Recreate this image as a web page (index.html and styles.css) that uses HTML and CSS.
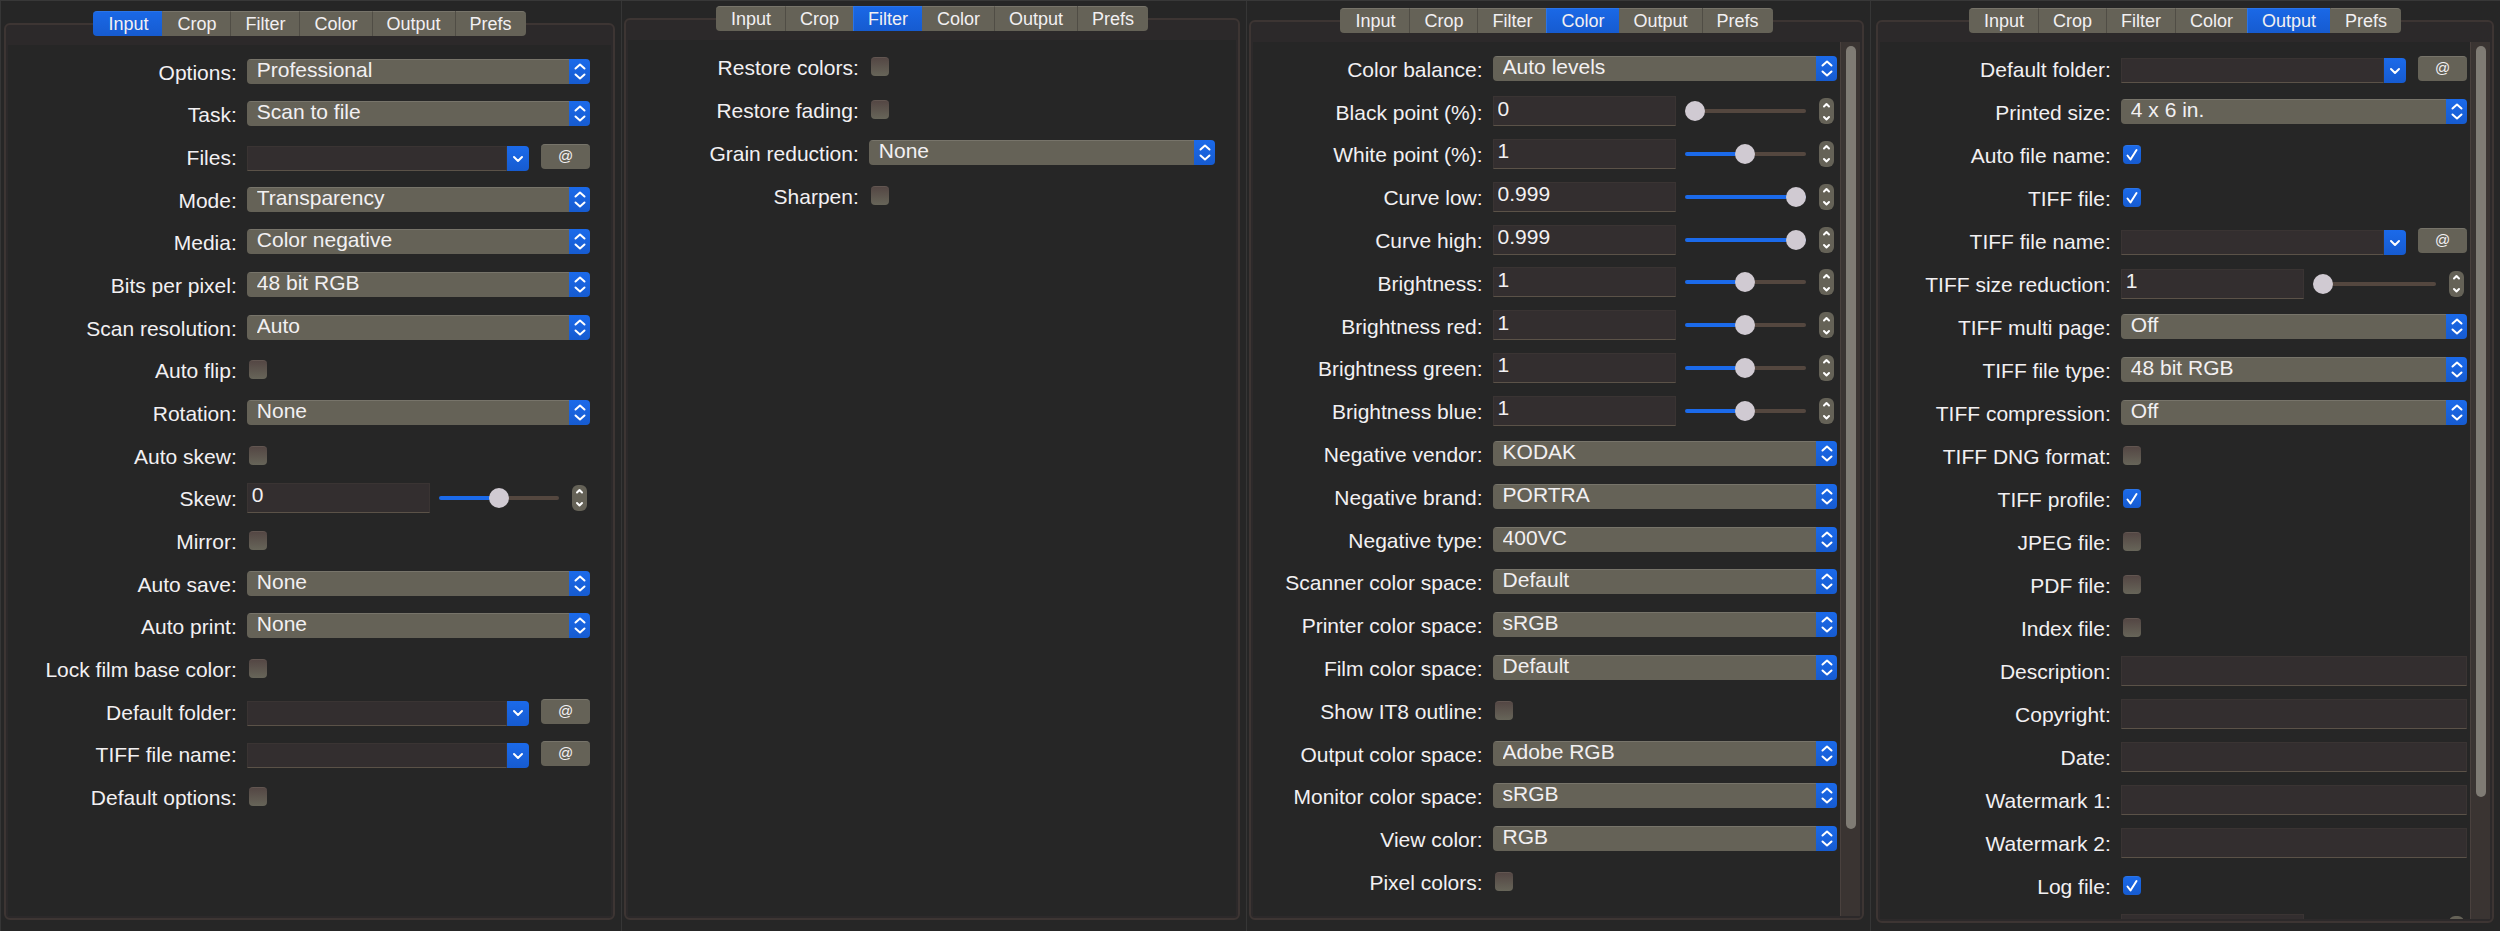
FILE: index.html
```
<!DOCTYPE html>
<html lang="en">
<head>
  <meta charset="UTF-8">
  <meta name="viewport" content="width=device-width, initial-scale=1.0">
  <title>Scan settings</title>
  <link rel="stylesheet" href="styles.css">
</head>
<body>
  <main class="panels">

    <!-- Input -->
    <section class="panel panel-input">
      <nav class="tabs">
        <button class="tab active">Input</button>
        <button class="tab">Crop</button>
        <button class="tab">Filter</button>
        <button class="tab">Color</button>
        <button class="tab">Output</button>
        <button class="tab">Prefs</button>
      </nav>
      <div class="frame">
        <form class="form">
          <div class="row"><label for="in-options">Options:</label><select id="in-options"><option>Professional</option></select></div>
          <div class="row"><label for="in-task">Task:</label><select id="in-task"><option>Scan to file</option></select></div>
          <div class="row">
            <label for="in-files">Files:</label>
            <div class="field">
              <div class="combo"><input type="text" id="in-files"><button type="button" class="drop" aria-label="Show list"></button></div>
              <button type="button" class="at">@</button>
            </div>
          </div>
          <div class="row"><label for="in-mode">Mode:</label><select id="in-mode"><option>Transparency</option></select></div>
          <div class="row"><label for="in-media">Media:</label><select id="in-media"><option>Color negative</option></select></div>
          <div class="row"><label for="in-bits">Bits per pixel:</label><select id="in-bits"><option>48 bit RGB</option></select></div>
          <div class="row"><label for="in-res">Scan resolution:</label><select id="in-res"><option>Auto</option></select></div>
          <div class="row"><label for="in-flip">Auto flip:</label><input type="checkbox" id="in-flip"></div>
          <div class="row"><label for="in-rotation">Rotation:</label><select id="in-rotation"><option>None</option></select></div>
          <div class="row"><label for="in-autoskew">Auto skew:</label><input type="checkbox" id="in-autoskew"></div>
          <div class="row">
            <label for="in-skew">Skew:</label>
            <div class="field">
              <input type="text" class="number" id="in-skew" value="0">
              <input type="range" class="slider" aria-label="Skew" value="50" style="--fill: 50%">
              <div class="stepper"><button type="button" class="up" aria-label="Increase"></button><button type="button" class="down" aria-label="Decrease"></button></div>
            </div>
          </div>
          <div class="row"><label for="in-mirror">Mirror:</label><input type="checkbox" id="in-mirror"></div>
          <div class="row"><label for="in-save">Auto save:</label><select id="in-save"><option>None</option></select></div>
          <div class="row"><label for="in-print">Auto print:</label><select id="in-print"><option>None</option></select></div>
          <div class="row"><label for="in-lock">Lock film base color:</label><input type="checkbox" id="in-lock"></div>
          <div class="row">
            <label for="in-folder">Default folder:</label>
            <div class="field">
              <div class="combo"><input type="text" id="in-folder"><button type="button" class="drop" aria-label="Show list"></button></div>
              <button type="button" class="at">@</button>
            </div>
          </div>
          <div class="row">
            <label for="in-tiffname">TIFF file name:</label>
            <div class="field">
              <div class="combo"><input type="text" id="in-tiffname"><button type="button" class="drop" aria-label="Show list"></button></div>
              <button type="button" class="at">@</button>
            </div>
          </div>
          <div class="row"><label for="in-defaults">Default options:</label><input type="checkbox" id="in-defaults"></div>
        </form>
      </div>
    </section>

    <!-- Filter -->
    <section class="panel panel-filter">
      <nav class="tabs">
        <button class="tab">Input</button>
        <button class="tab">Crop</button>
        <button class="tab active">Filter</button>
        <button class="tab">Color</button>
        <button class="tab">Output</button>
        <button class="tab">Prefs</button>
      </nav>
      <div class="frame">
        <form class="form">
          <div class="row"><label for="fi-colors">Restore colors:</label><input type="checkbox" id="fi-colors"></div>
          <div class="row"><label for="fi-fading">Restore fading:</label><input type="checkbox" id="fi-fading"></div>
          <div class="row"><label for="fi-grain">Grain reduction:</label><select id="fi-grain"><option>None</option></select></div>
          <div class="row"><label for="fi-sharpen">Sharpen:</label><input type="checkbox" id="fi-sharpen"></div>
        </form>
      </div>
    </section>

    <!-- Color -->
    <section class="panel panel-color">
      <nav class="tabs">
        <button class="tab">Input</button>
        <button class="tab">Crop</button>
        <button class="tab">Filter</button>
        <button class="tab active">Color</button>
        <button class="tab">Output</button>
        <button class="tab">Prefs</button>
      </nav>
      <div class="frame">
        <form class="form scrolled">
          <div class="row"><label for="co-balance">Color balance:</label><select id="co-balance"><option>Auto levels</option></select></div>
          <div class="row">
            <label for="co-black">Black point (%):</label>
            <div class="field">
              <input type="text" class="number" id="co-black" value="0">
              <input type="range" class="slider" aria-label="Black point" value="0" style="--fill: 0%">
              <div class="stepper"><button type="button" class="up" aria-label="Increase"></button><button type="button" class="down" aria-label="Decrease"></button></div>
            </div>
          </div>
          <div class="row">
            <label for="co-white">White point (%):</label>
            <div class="field">
              <input type="text" class="number" id="co-white" value="1">
              <input type="range" class="slider" aria-label="White point" value="50" style="--fill: 50%">
              <div class="stepper"><button type="button" class="up" aria-label="Increase"></button><button type="button" class="down" aria-label="Decrease"></button></div>
            </div>
          </div>
          <div class="row">
            <label for="co-low">Curve low:</label>
            <div class="field">
              <input type="text" class="number" id="co-low" value="0.999">
              <input type="range" class="slider" aria-label="Curve low" value="100" style="--fill: 100%">
              <div class="stepper"><button type="button" class="up" aria-label="Increase"></button><button type="button" class="down" aria-label="Decrease"></button></div>
            </div>
          </div>
          <div class="row">
            <label for="co-high">Curve high:</label>
            <div class="field">
              <input type="text" class="number" id="co-high" value="0.999">
              <input type="range" class="slider" aria-label="Curve high" value="100" style="--fill: 100%">
              <div class="stepper"><button type="button" class="up" aria-label="Increase"></button><button type="button" class="down" aria-label="Decrease"></button></div>
            </div>
          </div>
          <div class="row">
            <label for="co-bright">Brightness:</label>
            <div class="field">
              <input type="text" class="number" id="co-bright" value="1">
              <input type="range" class="slider" aria-label="Brightness" value="50" style="--fill: 50%">
              <div class="stepper"><button type="button" class="up" aria-label="Increase"></button><button type="button" class="down" aria-label="Decrease"></button></div>
            </div>
          </div>
          <div class="row">
            <label for="co-red">Brightness red:</label>
            <div class="field">
              <input type="text" class="number" id="co-red" value="1">
              <input type="range" class="slider" aria-label="Brightness red" value="50" style="--fill: 50%">
              <div class="stepper"><button type="button" class="up" aria-label="Increase"></button><button type="button" class="down" aria-label="Decrease"></button></div>
            </div>
          </div>
          <div class="row">
            <label for="co-green">Brightness green:</label>
            <div class="field">
              <input type="text" class="number" id="co-green" value="1">
              <input type="range" class="slider" aria-label="Brightness green" value="50" style="--fill: 50%">
              <div class="stepper"><button type="button" class="up" aria-label="Increase"></button><button type="button" class="down" aria-label="Decrease"></button></div>
            </div>
          </div>
          <div class="row">
            <label for="co-blue">Brightness blue:</label>
            <div class="field">
              <input type="text" class="number" id="co-blue" value="1">
              <input type="range" class="slider" aria-label="Brightness blue" value="50" style="--fill: 50%">
              <div class="stepper"><button type="button" class="up" aria-label="Increase"></button><button type="button" class="down" aria-label="Decrease"></button></div>
            </div>
          </div>
          <div class="row"><label for="co-vendor">Negative vendor:</label><select id="co-vendor"><option>KODAK</option></select></div>
          <div class="row"><label for="co-brand">Negative brand:</label><select id="co-brand"><option>PORTRA</option></select></div>
          <div class="row"><label for="co-type">Negative type:</label><select id="co-type"><option>400VC</option></select></div>
          <div class="row"><label for="co-scanner">Scanner color space:</label><select id="co-scanner"><option>Default</option></select></div>
          <div class="row"><label for="co-printer">Printer color space:</label><select id="co-printer"><option>sRGB</option></select></div>
          <div class="row"><label for="co-film">Film color space:</label><select id="co-film"><option>Default</option></select></div>
          <div class="row"><label for="co-it8">Show IT8 outline:</label><input type="checkbox" id="co-it8"></div>
          <div class="row"><label for="co-output">Output color space:</label><select id="co-output"><option>Adobe RGB</option></select></div>
          <div class="row"><label for="co-monitor">Monitor color space:</label><select id="co-monitor"><option>sRGB</option></select></div>
          <div class="row"><label for="co-view">View color:</label><select id="co-view"><option>RGB</option></select></div>
          <div class="row"><label for="co-pixel">Pixel colors:</label><input type="checkbox" id="co-pixel"></div>
        </form>
        <div class="scrollbar"><div class="thumb" style="height: 90%"></div></div>
      </div>
    </section>

    <!-- Output -->
    <section class="panel panel-output">
      <nav class="tabs">
        <button class="tab">Input</button>
        <button class="tab">Crop</button>
        <button class="tab">Filter</button>
        <button class="tab">Color</button>
        <button class="tab active">Output</button>
        <button class="tab">Prefs</button>
      </nav>
      <div class="frame">
        <form class="form scrolled">
          <div class="row">
            <label for="ou-folder">Default folder:</label>
            <div class="field">
              <div class="combo"><input type="text" id="ou-folder"><button type="button" class="drop" aria-label="Show list"></button></div>
              <button type="button" class="at">@</button>
            </div>
          </div>
          <div class="row"><label for="ou-size">Printed size:</label><select id="ou-size"><option>4 x 6 in.</option></select></div>
          <div class="row"><label for="ou-autoname">Auto file name:</label><input type="checkbox" id="ou-autoname" checked></div>
          <div class="row"><label for="ou-tiff">TIFF file:</label><input type="checkbox" id="ou-tiff" checked></div>
          <div class="row">
            <label for="ou-tiffname">TIFF file name:</label>
            <div class="field">
              <div class="combo"><input type="text" id="ou-tiffname"><button type="button" class="drop" aria-label="Show list"></button></div>
              <button type="button" class="at">@</button>
            </div>
          </div>
          <div class="row">
            <label for="ou-reduction">TIFF size reduction:</label>
            <div class="field">
              <input type="text" class="number" id="ou-reduction" value="1">
              <input type="range" class="slider" aria-label="TIFF size reduction" value="0" style="--fill: 0%">
              <div class="stepper"><button type="button" class="up" aria-label="Increase"></button><button type="button" class="down" aria-label="Decrease"></button></div>
            </div>
          </div>
          <div class="row"><label for="ou-multi">TIFF multi page:</label><select id="ou-multi"><option>Off</option></select></div>
          <div class="row"><label for="ou-type">TIFF file type:</label><select id="ou-type"><option>48 bit RGB</option></select></div>
          <div class="row"><label for="ou-compression">TIFF compression:</label><select id="ou-compression"><option>Off</option></select></div>
          <div class="row"><label for="ou-dng">TIFF DNG format:</label><input type="checkbox" id="ou-dng"></div>
          <div class="row"><label for="ou-profile">TIFF profile:</label><input type="checkbox" id="ou-profile" checked></div>
          <div class="row"><label for="ou-jpeg">JPEG file:</label><input type="checkbox" id="ou-jpeg"></div>
          <div class="row"><label for="ou-pdf">PDF file:</label><input type="checkbox" id="ou-pdf"></div>
          <div class="row"><label for="ou-index">Index file:</label><input type="checkbox" id="ou-index"></div>
          <div class="row"><label for="ou-desc">Description:</label><input type="text" id="ou-desc"></div>
          <div class="row"><label for="ou-copy">Copyright:</label><input type="text" id="ou-copy"></div>
          <div class="row"><label for="ou-date">Date:</label><input type="text" id="ou-date"></div>
          <div class="row"><label for="ou-water1">Watermark 1:</label><input type="text" id="ou-water1"></div>
          <div class="row"><label for="ou-water2">Watermark 2:</label><input type="text" id="ou-water2"></div>
          <div class="row"><label for="ou-log">Log file:</label><input type="checkbox" id="ou-log" checked></div>
          <!-- cut off by the bottom of the scroll area -->
          <div class="row">
            <span></span>
            <div class="field">
              <input type="text" class="number" aria-label="Log size">
              <input type="range" class="slider" aria-label="Log size slider" value="50" style="--fill: 50%">
              <div class="stepper"><button type="button" class="up" aria-label="Increase"></button><button type="button" class="down" aria-label="Decrease"></button></div>
            </div>
          </div>
        </form>
        <div class="scrollbar"><div class="thumb" style="height: 86%"></div></div>
      </div>
    </section>

  </main>
</body>
</html>
```
FILE: styles.css
```
* {
  box-sizing: border-box;
}
body {
  margin: 0;
  background-color: #262626;
  color: #f2f0f2;
  font-family: "Liberation Sans", Arial, sans-serif;
  font-size: 21px;
}
button, input, select {
  margin: 0;
  padding: 0;
  border: none;
  color: inherit;
  font-family: inherit;
  font-size: inherit;
}
.panels {
  display: grid;
  grid-template-columns: 621fr 625fr 624fr 630fr;
  height: 100vh;
  border-top: 1px solid #383838;
}
.panel {
  display: flex;
  flex-direction: column;
  min-height: 0;
  padding: 7px 6px 11px 2px;
  border-left: 1px solid #363636;
}
.panel-input {
  padding-top: 10px;
  padding-left: 3px;
}
.panel-filter {
  padding-top: 5px;
}
.panel-output {
  padding-bottom: 8px;
  padding-left: 5px;
}

/* Tabs */
.tabs {
  display: flex;
  justify-content: center;
  position: relative;
  z-index: 1;
}
.tab {
  height: 25px;
  padding: 0 14px;
  border-left: 1px solid #504d45;
  border-top: 1px solid #77746a;
  background-color: #656257;
  font-size: 18px;
  line-height: 24px;
}
.tab:first-child {
  border-left: none;
  padding-left: 15px;
  border-radius: 4px 0 0 4px;
}
.tab:last-child {
  border-radius: 0 4px 4px 0;
}
.tab.active {
  border-color: #2a74e8;
  background: linear-gradient(#1a68e6, #165bd0);
}
.tab.active + .tab {
  border-left-color: #656257;
}

/* Frame round the form */
.frame {
  flex: 1;
  display: flex;
  min-height: 0;
  margin-top: -13px;
  padding: 20px 2px 2px;
  border: 2px solid #3d3533;
  border-radius: 6px;
  background-color: #2c292a;
}
.form {
  flex: 1;
  display: grid;
  grid-auto-rows: 43px;
  align-content: start;
  min-height: 0;
  overflow: hidden;
  padding: 5px 21px 0 0;
  background-color: #262626;
}
.form.scrolled {
  padding-right: 3px;
}
/* rows share the height that is there */
.panel-input .form,
.panel-color .form {
  grid-auto-rows: minmax(42px, 1fr);
  align-content: stretch;
}
.panel-input .form {
  padding-bottom: 98px;
}
.panel-color .form {
  padding-bottom: 13px;
}
.row {
  display: grid;
  grid-template-columns: 2fr 3fr;
  column-gap: 10px;
  align-items: center;
}
.row label {
  padding-top: 3px;
  text-align: right;
  line-height: 24px;
  white-space: nowrap;
}
.field {
  display: flex;
  align-items: center;
}

/* Drop-downs */
select {
  appearance: none;
  width: 100%;
  height: 25px;
  padding: 0 24px 3px 10px;
  border-radius: 4px;
  line-height: 22px;
  background:
    url("data:image/svg+xml,%3Csvg xmlns='http://www.w3.org/2000/svg' width='21' height='25' fill='none' stroke='white' stroke-width='2' stroke-linecap='round' stroke-linejoin='round'%3E%3Cpath d='M6.5 9.5l4.5-4 4.5 4M6.5 15.5l4.5 4 4.5-4'/%3E%3C/svg%3E") right center no-repeat,
    linear-gradient(#1b6aea, #165bd0) right / 21px 100% no-repeat,
    linear-gradient(#77746a 1px, #656257 1px);
}

/* Text boxes */
input[type="text"] {
  width: 100%;
  min-width: 0;
  height: 30px;
  padding: 0 4px 5px;
  border: 1px solid #3a3433;
  border-bottom: 1px solid #5b5248;
  background-color: #332e2f;
}
input[type="text"].number {
  flex: 0 1 183px;
}
.combo {
  flex: 1;
  display: flex;
  height: 25px;
  margin-top: 4px;
}
.combo input[type="text"] {
  height: 25px;
}
.drop {
  flex: none;
  width: 22px;
  border-radius: 0 4px 4px 0;
  background:
    url("data:image/svg+xml,%3Csvg xmlns='http://www.w3.org/2000/svg' width='12' height='8' fill='none' stroke='white' stroke-width='2' stroke-linecap='round' stroke-linejoin='round'%3E%3Cpath d='M2 2l4 4 4-4'/%3E%3C/svg%3E") center no-repeat,
    linear-gradient(#1b6aea, #165bd0);
}
.at {
  flex: none;
  width: 49px;
  height: 25px;
  margin-left: 12px;
  padding-bottom: 3px;
  border-top: 1px solid #77746a;
  border-radius: 4px;
  background-color: #656257;
  font-size: 15px;
}

/* Tick boxes */
input[type="checkbox"] {
  appearance: none;
  width: 18px;
  height: 19px;
  margin-left: 2px;
  border-top: 1px solid #625651;
  border-radius: 4px;
  background: linear-gradient(#544744, #676559);
}
input[type="checkbox"]:checked {
  border-top-color: #2a74e8;
  background:
    url("data:image/svg+xml,%3Csvg xmlns='http://www.w3.org/2000/svg' width='18' height='18' fill='none' stroke='white' stroke-width='2' stroke-linecap='round' stroke-linejoin='round'%3E%3Cpath d='M4.5 9.5l3 4 6-9.5'/%3E%3C/svg%3E") center no-repeat,
    linear-gradient(#1b6aea, #165bd0);
}

/* Slider and stepper */
.slider {
  appearance: none;
  flex: 1;
  min-width: 0;
  height: 20px;
  margin: 0 13px 0 9px;
  background: none;
}
.slider::-webkit-slider-runnable-track {
  height: 4px;
  border-radius: 2px;
  background: linear-gradient(to right, #1b6aea var(--fill), #54473f var(--fill));
}
.slider::-webkit-slider-thumb {
  appearance: none;
  width: 20px;
  height: 20px;
  margin-top: -8px;
  border-radius: 50%;
  background-color: #d0cad2;
}
.stepper {
  flex: none;
  display: flex;
  flex-direction: column;
  width: 15px;
  height: 26px;
  margin-right: 3px;
  border-radius: 6px;
  overflow: hidden;
  background-color: #656257;
}
.stepper button {
  flex: 1;
  background: center no-repeat;
}
.stepper .up {
  background-image: url("data:image/svg+xml,%3Csvg xmlns='http://www.w3.org/2000/svg' width='9' height='8' fill='none' stroke='white' stroke-width='2' stroke-linecap='round' stroke-linejoin='round'%3E%3Cpath d='M2 5.5l2.5-2.5 2.5 2.5'/%3E%3C/svg%3E");
}
.stepper .down {
  background-image: url("data:image/svg+xml,%3Csvg xmlns='http://www.w3.org/2000/svg' width='9' height='8' fill='none' stroke='white' stroke-width='2' stroke-linecap='round' stroke-linejoin='round'%3E%3Cpath d='M2 3l2.5 2.5 2.5-2.5'/%3E%3C/svg%3E");
}

/* Scroll bar */
.scrollbar {
  flex: none;
  width: 20px;
  padding: 4px 4px 0 5px;
  border-left: 1px solid #4a413e;
  background-color: #3a3432;
}
.thumb {
  border-radius: 5px;
  background-color: #7f7b74;
}
```
